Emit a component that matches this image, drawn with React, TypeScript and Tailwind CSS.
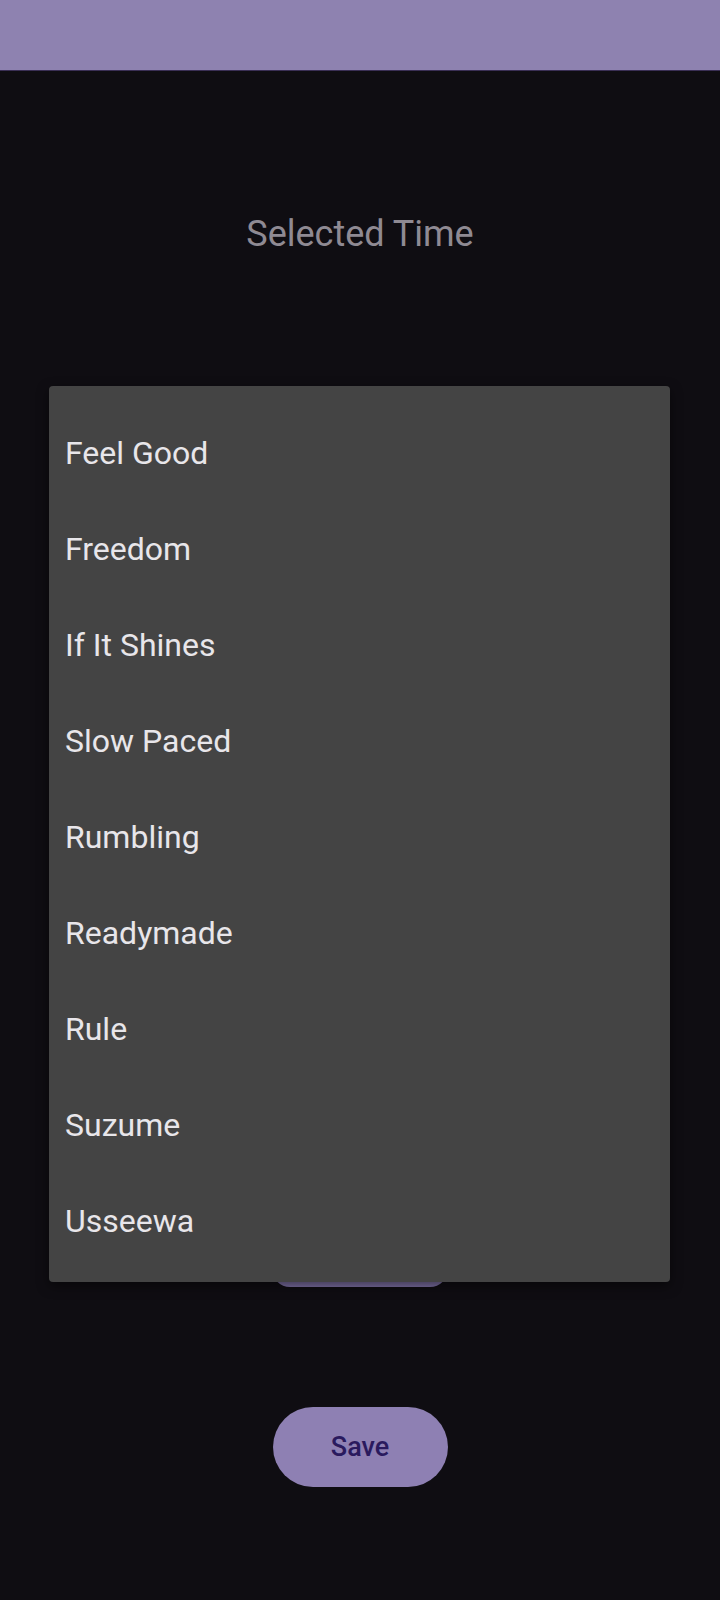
import React from "react";

const songs = [
  "Feel Good",
  "Freedom",
  "If It Shines",
  "Slow Paced",
  "Rumbling",
  "Readymade",
  "Rule",
  "Suzume",
  "Usseewa",
];

export default function App() {
  return (
    <main
      className="relative min-h-[1600px] bg-[#0f0d12]"
      style={{ fontFamily: "Roboto, 'Noto Sans', sans-serif" }}
    >
      {/* App bar */}
      <header className="h-[71px] bg-[#8e82b0] border-b border-[#3a2f55]" />

      <div className="flex flex-col items-center">
        <p className="mt-[142px] text-[36px] leading-[42px] text-[#8f8a93]">Selected Time</p>

        {/* song picker button (covered by the open menu) */}
        <button className="mt-[952px] h-[80px] w-[176px] rounded-[18px] bg-[#7d70a3]" />

        <button className="mt-[120px] h-[80px] w-[175px] rounded-full bg-[#8e80b3] text-[27px] font-medium text-[#2a1a5e]">
          Save
        </button>
      </div>

      {/* Dropdown menu */}
      <ul className="absolute left-[49px] top-[386px] w-[621px] rounded-[4px] bg-[#444444] pt-[19px] pb-[13px] shadow-[0_4px_12px_rgba(0,0,0,0.5)]">
        {songs.map((s) => (
          <li key={s} className="flex h-[96px] items-center px-[16px] text-[32px] text-[#e8e6ea]">
            {s}
          </li>
        ))}
      </ul>
    </main>
  );
}
